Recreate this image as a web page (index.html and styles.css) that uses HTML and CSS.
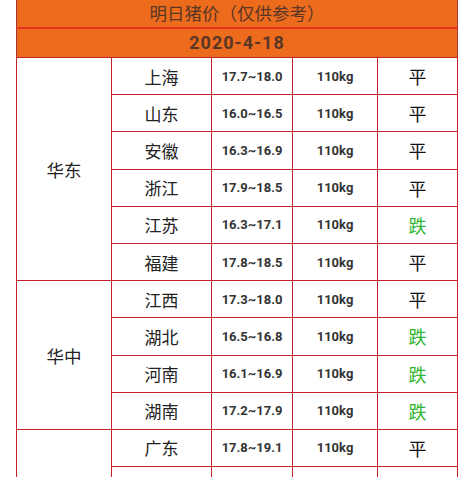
FILE: index.html
```html
<!DOCTYPE html>
<html lang="zh-CN">
<head>
<meta charset="utf-8">
<link rel="stylesheet" href="styles.css">
</head>
<body>
<table class="price-table">
  <colgroup>
    <col class="c-region"><col class="c-prov"><col class="c-price"><col class="c-weight"><col class="c-trend">
  </colgroup>
  <thead>
    <tr class="title-row"><th colspan="5">明日猪价（仅供参考）</th></tr>
    <tr class="date-row"><th colspan="5">2020-4-18</th></tr>
  </thead>
  <tbody>
    <tr><td class="region" rowspan="6">华东</td><td class="prov">上海</td><td class="num">17.7~18.0</td><td class="num">110kg</td><td class="trend">平</td></tr>
    <tr><td class="prov">山东</td><td class="num">16.0~16.5</td><td class="num">110kg</td><td class="trend">平</td></tr>
    <tr><td class="prov">安徽</td><td class="num">16.3~16.9</td><td class="num">110kg</td><td class="trend">平</td></tr>
    <tr><td class="prov">浙江</td><td class="num">17.9~18.5</td><td class="num">110kg</td><td class="trend">平</td></tr>
    <tr><td class="prov">江苏</td><td class="num">16.3~17.1</td><td class="num">110kg</td><td class="trend down">跌</td></tr>
    <tr><td class="prov">福建</td><td class="num">17.8~18.5</td><td class="num">110kg</td><td class="trend">平</td></tr>
    <tr><td class="region" rowspan="4">华中</td><td class="prov">江西</td><td class="num">17.3~18.0</td><td class="num">110kg</td><td class="trend">平</td></tr>
    <tr><td class="prov">湖北</td><td class="num">16.5~16.8</td><td class="num">110kg</td><td class="trend down">跌</td></tr>
    <tr><td class="prov">河南</td><td class="num">16.1~16.9</td><td class="num">110kg</td><td class="trend down">跌</td></tr>
    <tr><td class="prov">湖南</td><td class="num">17.2~17.9</td><td class="num">110kg</td><td class="trend down">跌</td></tr>
    <tr><td class="region" rowspan="3">华南</td><td class="prov">广东</td><td class="num">17.8~19.1</td><td class="num">110kg</td><td class="trend">平</td></tr>
    <tr><td class="prov">广西</td><td class="num">17.0~17.6</td><td class="num">110kg</td><td class="trend">平</td></tr>
    <tr><td class="prov">海南</td><td class="num">18.0~18.6</td><td class="num">110kg</td><td class="trend">平</td></tr>
  </tbody>
</table>
</body>
</html>
```
FILE: styles.css
```css
html, body {
  margin: 0;
  padding: 0;
  background: #ffffff;
  overflow: hidden;
}
body {
  font-family: "Noto Sans CJK SC", "Noto Sans", sans-serif;
  color: #222;
}
.price-table {
  margin: -1px 0 0 16px;
  width: 441px;
  border-collapse: collapse;
  table-layout: fixed;
}
.c-region { width: 95px; }
.c-prov { width: 100px; }
.c-price { width: 81px; }
.c-weight { width: 85px; }
.c-trend { width: 80px; }

.price-table th,
.price-table td {
  border: 1px solid #c4202a;
  padding: 0;
  text-align: center;
  vertical-align: middle;
}
.price-table th {
  background: #ec6b1d;
  color: #5a3626;
  border-left-color: #a8343a;
  border-right-color: #a8343a;
}
.title-row th {
  height: 26px;
  font-size: 17.5px;
  font-weight: 400;
  line-height: 20px;
  padding-bottom: 1px;
  border-bottom: 2px solid #e2321c;
}
.date-row th {
  height: 28px;
  font-family: "Roboto", "Liberation Sans", sans-serif;
  font-size: 18px;
  font-weight: 700;
  letter-spacing: 1px;
  line-height: 20px;
}
.price-table tbody tr {
  height: 37.2px;
}
.region {
  font-size: 17.5px;
  color: #222;
}
.prov {
  font-size: 17px;
  color: #222;
}
.num {
  font-family: "Roboto", "Liberation Sans", sans-serif;
  font-size: 13px;
  font-weight: 700;
  color: #333;
}
.trend {
  font-size: 18px;
  color: #111;
}
.trend.down {
  color: #2fb52f;
}
```
